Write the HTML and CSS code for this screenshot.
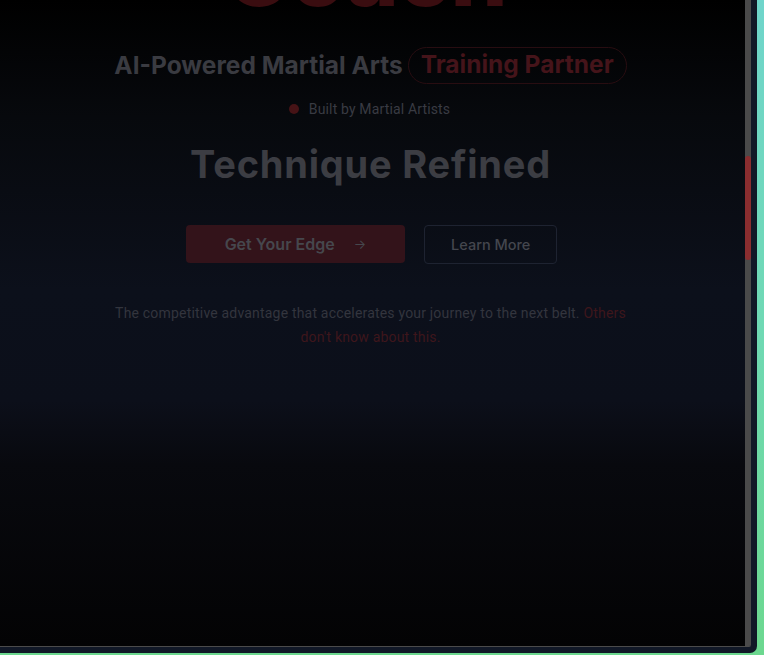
FILE: index.html
```html
<!DOCTYPE html>
<html lang="en">
<head>
<meta charset="utf-8">
<title>Coach</title>
<link rel="stylesheet" href="styles.css">
</head>
<body>
<div class="frame">
  <div class="window">
    <main class="viewport">
      <section class="hero">
        <h1 class="brand">Coach</h1>
        <div class="tagline">
          <span class="tag-main">AI-Powered Martial Arts</span>
          <span class="tag-pill">Training Partner</span>
        </div>
        <div class="built"><span class="dot"></span><span>Built by Martial Artists</span></div>
        <h2 class="headline">Technique Refined</h2>
        <div class="actions">
          <a class="btn btn-primary" href="#">Get Your Edge <span class="arrow">&#8594;</span></a>
          <a class="btn btn-outline" href="#">Learn More</a>
        </div>
        <p class="lead">The competitive advantage that accelerates your journey to the next belt. <span class="accent">Others don't know about this.</span></p>
      </section>
    </main>
    <div class="scrollbar"><div class="thumb"></div></div>
  </div>
</div>
</body>
</html>
```

FILE: styles.css
```css
* { box-sizing: border-box; }
html, body { margin: 0; padding: 0; }
body {
  width: 764px;
  height: 655px;
  overflow: hidden;
  background: linear-gradient(180deg, #6fd5cb 0%, #6fd9b4 50%, #6cd88f 100%);
  font-family: Roboto, "Noto Sans", sans-serif;
}
.frame {
  width: 757px;
  height: 653px;
  background: #111827;
  border-bottom-right-radius: 7px;
  padding: 0 6px 6px 0;
}
.window {
  display: flex;
  height: 647px;
  border-bottom: 1px solid #4b4b4b;
  border-bottom-right-radius: 2px;
  overflow: hidden;
}
.viewport {
  flex: 1;
  overflow: hidden;
  background: linear-gradient(180deg, #000000 0%, #07090d 18%, #0c101b 45%, #0c0f1a 62%, #08090e 72%, #030304 100%);
}
.scrollbar {
  width: 6px;
  background: #4a4a4a;
}
.thumb {
  margin-top: 156px;
  height: 104px;
  border-radius: 3px;
  background: #8a2d2f;
}
.hero {
  display: flex;
  flex-direction: column;
  align-items: center;
  text-align: center;
}
.brand {
  margin: -71px 0 0 -14px;
  font-family: Inter, "Noto Sans", sans-serif;
  font-weight: 800;
  font-size: 90px;
  line-height: 1;
  letter-spacing: -1px;
  color: #3a0d10;
}
.tagline {
  display: flex;
  align-items: center;
  gap: 5px;
  margin: 28px 0 0 -4px;
  font-family: Inter, "Noto Sans", sans-serif;
  font-weight: 700;
  font-size: 24.5px;
  letter-spacing: 0;
}
.tag-main { color: #3a3b41; padding-bottom: 2px; }
.tag-pill {
  color: #45141a;
  border: 1px solid #280d11;
  border-radius: 999px;
  padding: 3px 12px 6px;
  line-height: 26px;
}
.built {
  display: flex;
  align-items: center;
  gap: 10px;
  margin: 15px 0 0 -6px;
  font-size: 14px;
  line-height: 20px;
  letter-spacing: 0.15px;
  color: #393b43;
}
.dot {
  width: 10px;
  height: 10px;
  border-radius: 50%;
  background: #461316;
}
.headline {
  margin: 22px 0 0 -4px;
  font-family: Inter, "Noto Sans", sans-serif;
  font-weight: 700;
  font-size: 38px;
  line-height: 46px;
  letter-spacing: 0.8px;
  color: #3c3d43;
}
.actions {
  display: flex;
  gap: 19px;
  margin: 38px 0 0 -2px;
}
.btn {
  display: flex;
  align-items: center;
  height: 38px;
  border-radius: 4px;
  font-family: Inter, "Noto Sans", sans-serif;
  font-size: 16px;
  font-weight: 600;
  text-decoration: none;
  letter-spacing: 0;
}
.btn-primary {
  background: #33131a;
  color: #46474d;
  padding: 0 39px;
  gap: 19px;
}
.arrow { font-size: 13px; font-weight: 400; }
.btn-outline {
  height: 39px;
  border: 1px solid #1e2331;
  color: #44464e;
  padding: 0 26px;
  font-weight: 500;
  font-size: 14.5px;
}
.lead {
  margin: 37px 0 0 -4px;
  max-width: 520px;
  font-size: 14px;
  line-height: 24px;
  letter-spacing: 0.19px;
  color: #33353e;
}
.accent { color: #3e161c; }
```
